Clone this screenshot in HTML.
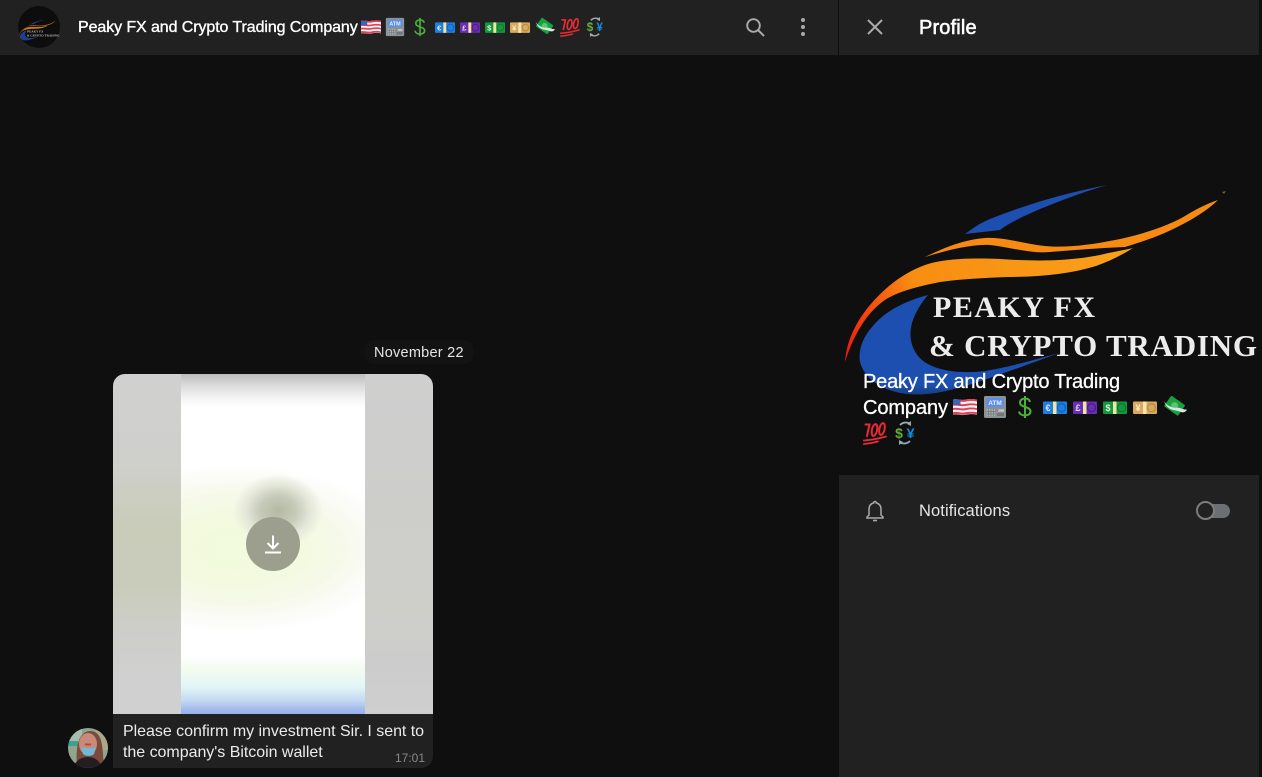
<!DOCTYPE html>
<html><head><meta charset="utf-8"><style>
html,body{margin:0;padding:0;width:1262px;height:777px;overflow:hidden;background:#0f0f0f;font-family:"Liberation Sans",sans-serif;}
.a{position:absolute;white-space:nowrap;}
svg{position:absolute;display:block;overflow:visible}
</style></head><body>
<svg width="0" height="0" style="position:absolute">
<defs>
<symbol id="flag" viewBox="0 0 24 24" overflow="visible"><path d="M0 4.500c4-1 8 1 12 .2s8-1 12 0v15c-4-1-8-.6-12 .2s-8-.9-12-.2z" fill="#f7f2f2"/><path d="M0 4.500c4-1 8 1 12 .2s8-1 12 0v1.800c-4-1-8-.6-12 .2s-8-1-12-.2zM0 8.800c4-1 8 1 12 .2s8-1 12 0v1.800c-4-1-8-.6-12 .2s-8-1-12-.2zM0 13c4-1 8 1 12 .2s8-1 12 0V15c-4-1-8-.6-12 .2s-8-1-12-.2zM0 17.200c4-1 8 1 12 .2s8-1 12 0v2c-4-1-8-.6-12 .2s-8-.9-12-.2z" fill="#e0405a"/><path d="M0 4.500c2.500-.6 5 0 7.500.3v5.600c-2.500-.1-5-.7-7.500-.4z" fill="#3f62b5"/></symbol>
<symbol id="atm" viewBox="0 0 24 24" overflow="visible"><rect x="1" y="1" width="22" height="22" rx="1.500" fill="#8a9296"/><rect x="3.500" y="3" width="17" height="9" fill="#5c8fe8"/><text x="12" y="10" font-family="Liberation Sans" font-size="6.500" font-weight="700" text-anchor="middle" fill="#e6eefc">ATM</text><path d="M3.500 14h8.500v7H3.500z" fill="#a8aeb0"/><path d="M5.500 14v7M8 14v7M10.500 14v7M3.500 16.500h8.500M3.500 19h8.500" stroke="#6d7478" stroke-width=".7"/><rect x="14" y="14.500" width="7" height="2" fill="#c9ccb8"/><rect x="14" y="18" width="7" height="3" fill="#70777b"/><circle cx="14.500" cy="15.500" r=".9" fill="#d9534a"/></symbol>
<symbol id="dollar" viewBox="0 0 24 24" overflow="visible"><path d="M12 1v22M17 7c-.5-2.500-2.500-3.500-5-3.500S7 5 7 7.500c0 5.500 10.500 3.500 10.500 9 0 2.500-2.500 4-5.500 4s-5.500-1.500-6-4" fill="none" stroke="#4caf3c" stroke-width="2"/></symbol>
<symbol id="euro" viewBox="0 0 24 24" overflow="visible"><rect x="0" y="6.500" width="24" height="12.500" rx="1" fill="#1e7fe0"/><rect x="10" y="6.500" width="3.500" height="12.500" fill="#f3e4a0"/><circle cx="18.500" cy="12.700" r="4" fill="none" stroke="#0f62bd" stroke-width="1.300"/><text x="5" y="16" font-family="Liberation Sans" font-size="9" font-weight="700" text-anchor="middle" fill="#cfe6ff">€</text></symbol>
<symbol id="pound" viewBox="0 0 24 24" overflow="visible"><rect x="0" y="6.500" width="24" height="12.500" rx="1" fill="#6a2eb0"/><rect x="10" y="6.500" width="3.500" height="12.500" fill="#f3e4a0"/><circle cx="18.500" cy="12.700" r="4" fill="none" stroke="#4b1c8a" stroke-width="1.300"/><text x="5" y="16" font-family="Liberation Sans" font-size="9" font-weight="700" text-anchor="middle" fill="#e5d5fa">£</text></symbol>
<symbol id="bill" viewBox="0 0 24 24" overflow="visible"><rect x="0" y="6.500" width="24" height="12.500" rx="1" fill="#15973f"/><rect x="10" y="6.500" width="3.500" height="12.500" fill="#f3e4a0"/><circle cx="18.500" cy="12.700" r="4" fill="none" stroke="#0b7a2e" stroke-width="1.300"/><text x="5" y="16" font-family="Liberation Sans" font-size="9" font-weight="700" text-anchor="middle" fill="#d5f5dd">$</text></symbol>
<symbol id="yen" viewBox="0 0 24 24" overflow="visible"><rect x="0" y="6.500" width="24" height="12.500" rx="1" fill="#d9a95c"/><rect x="10" y="6.500" width="3.500" height="12.500" fill="#f7e6b0"/><circle cx="18.500" cy="12.700" r="4" fill="none" stroke="#b98a42" stroke-width="1.300"/><text x="5" y="16" font-family="Liberation Sans" font-size="9" font-weight="700" text-anchor="middle" fill="#fbeecb">¥</text></symbol>
<symbol id="wings" viewBox="0 0 24 24" overflow="visible"><g transform="rotate(35 12 11)"><rect x="3" y="4.500" width="17" height="13" rx="1" fill="#17a23f"/><circle cx="11.500" cy="11" r="3.500" fill="#5fc56c"/></g><path d="M1 6c2 3.500 5 5.500 9 6.500 3 .8 5-.3 7 .5 2.500 1 5 1.800 7 1.500-1 2-3 3.500-6 2.500-2.500-.8-5-1.500-8-2-4-1-7.500-4-9-9z" fill="#dde3e4"/></symbol>
<symbol id="hundred" viewBox="0 0 24 24" overflow="visible"><g fill="none" stroke="#ea2a35" stroke-width="2" stroke-linecap="round"><path d="M2.500 3.500h4L4 15"/><ellipse cx="11.500" cy="9" rx="2.600" ry="6" transform="rotate(12 11.500 9)"/><ellipse cx="19" cy="8" rx="2.600" ry="6" transform="rotate(12 19 8)"/><path d="M.8 19.500C9 19 16 17.500 23 15.500M.8 23C7 22.500 11 21.500 15 20.500" stroke-width="1.800"/></g></symbol>
<symbol id="exch" viewBox="0 0 24 24" overflow="visible"><g fill="none" stroke="#9aa9b2" stroke-width="1.800"><path d="M7 4C10 1 14 1 17 2.500M17 20c-3 3-7 3-10 1.500"/></g><path d="M18 0v5l-4-2zM6 24v-5l4 2z" fill="#9aa9b2"/><text x="6" y="17" font-family="Liberation Sans" font-size="14" font-weight="700" text-anchor="middle" fill="#66ad3c">$</text><text x="17.500" y="17" font-family="Liberation Sans" font-size="14" font-weight="700" text-anchor="middle" fill="#0f8fdd">¥</text></symbol>

<symbol id="logo" viewBox="840 170 422 240" overflow="visible">
<path d="M1107 185C1060 194 1020 207 990 219C980 223 972 229 965 234L1000 230C1010 222 1030 213 1050 205C1070 197 1090 190 1107 185Z" fill="#1c4fb0"/>
<path d="M928 295C905 301 885 311 872 327C862 338 858 352 860 362C864 377 878 388 900 393C920 397 945 393 975 383C1005 373 1035 362 1059 353C1030 361 1005 368 985 371C960 374 935 371 922 360C912 351 908 338 912 323C915 313 921 303 928 295Z" fill="#1c4fb0"/>
<path d="M845 362C846 345 853 327 866 310C880 292 900 274 925 265C945 258 975 258 1000 259C1030 261 1065 262 1100 255C1112 252 1125 250 1133 248C1122 255 1110 261 1096 266C1070 274 1040 277 1007 277C985 278 960 279 940 282C920 286 903 290 888 298C870 309 855 330 845 362Z" fill="url(#og)"/>
<path d="M925 257C940 250 960 240 985 238C1005 237 1025 244 1045 246C1065 248 1090 245 1115 240C1140 235 1170 226 1190 213C1202 206 1212 202 1218 200C1210 208 1198 216 1185 223C1165 234 1145 241 1125 247C1100 248 1075 250 1050 252C1030 254 1010 247 990 245C970 244 945 251 925 257Z" fill="#f68a12"/>
<path d="M1222 192l4-1-2 3z" fill="#7a5a20"/>
<text x="933" y="317" font-family="Liberation Serif" font-size="30" font-weight="700" fill="#ececec" textLength="162" lengthAdjust="spacing">PEAKY FX</text>
<text x="929" y="356" font-family="Liberation Serif" font-size="31" font-weight="700" fill="#ececec" textLength="328" lengthAdjust="spacing">&amp; CRYPTO TRADING</text>
</symbol>
<linearGradient id="og" x1="845" y1="360" x2="1130" y2="250" gradientUnits="userSpaceOnUse"><stop offset="0" stop-color="#f01515"/><stop offset=".12" stop-color="#f5450f"/><stop offset=".3" stop-color="#f88d12"/><stop offset="1" stop-color="#f9a11a"/></linearGradient>
</defs>
</svg>

<!-- left header -->
<div class="a" style="left:0;top:0;width:838px;height:55px;background:#212121"></div>
<div class="a" style="left:838px;top:0;width:1px;height:55px;background:#0f0f0f"></div>
<!-- right panel -->
<div class="a" style="left:839px;top:0;width:420px;height:55px;background:#212121"></div>
<div class="a" style="left:839px;top:475px;width:420px;height:302px;background:#212121"></div>

<!-- header avatar -->
<div class="a" style="left:18px;top:6px;width:42px;height:42px;border-radius:50%;background:#0d0d0d;overflow:hidden"></div>
<svg style="left:18px;top:18px;opacity:.8" width="42" height="24"><use href="#logo" x="0" y="0" width="42" height="24"/></svg>

<div class="a" style="left:78px;top:18px;font-size:16px;line-height:20px;font-weight:400;color:#fff;-webkit-text-stroke:.35px #fff;letter-spacing:-.09px" id="t1">Peaky FX and Crypto Trading Company</div>
<svg style="left:361px;top:17px" width="20" height="20"><use href="#flag" width="20" height="20"/></svg>
<svg style="left:385px;top:17px" width="20" height="20"><use href="#atm" width="20" height="20"/></svg>
<svg style="left:410px;top:17px" width="20" height="20"><use href="#dollar" width="20" height="20"/></svg>
<svg style="left:435px;top:17px" width="20" height="20"><use href="#euro" width="20" height="20"/></svg>
<svg style="left:460px;top:17px" width="20" height="20"><use href="#pound" width="20" height="20"/></svg>
<svg style="left:485px;top:17px" width="20" height="20"><use href="#bill" width="20" height="20"/></svg>
<svg style="left:510px;top:17px" width="20" height="20"><use href="#yen" width="20" height="20"/></svg>
<svg style="left:535px;top:17px" width="20" height="20"><use href="#wings" width="20" height="20"/></svg>
<svg style="left:560px;top:17px" width="20" height="20"><use href="#hundred" width="20" height="20"/></svg>
<svg style="left:585px;top:17px" width="20" height="20"><use href="#exch" width="20" height="20"/></svg>

<!-- search -->
<svg style="left:743px;top:15px" width="24" height="24" viewBox="0 0 24 24"><circle cx="10.500" cy="10.500" r="6.300" fill="none" stroke="#aaa" stroke-width="1.900"/><path d="M15 15l6 6" stroke="#aaa" stroke-width="2" fill="none"/></svg>
<!-- dots -->
<svg style="left:791px;top:15px" width="24" height="24" viewBox="0 0 24 24"><circle cx="12" cy="5" r="2" fill="#aaa"/><circle cx="12" cy="12" r="2" fill="#aaa"/><circle cx="12" cy="19" r="2" fill="#aaa"/></svg>
<!-- close -->
<svg style="left:863px;top:15px" width="24" height="24" viewBox="0 0 24 24"><path d="M5 5l14 14M19 5L5 19" stroke="#aaa" stroke-width="2" fill="none"/></svg>
<div class="a" style="left:919px;top:16px;font-size:20px;line-height:24px;font-weight:400;color:#fff;-webkit-text-stroke:.55px #fff;letter-spacing:.15px">Profile</div>

<!-- hero -->
<svg style="left:839px;top:170px" width="420" height="240" viewBox="839 170 420 240"><use href="#logo" x="840" y="170" width="422" height="240"/></svg>
<div class="a" style="left:839px;top:385px;width:420px;height:90px;background:linear-gradient(to bottom,rgba(15,15,15,0),rgba(15,15,15,.7) 25%,rgba(15,15,15,.95))"></div>
<div class="a" style="left:863px;top:369px;font-size:20px;line-height:26px;font-weight:400;color:#fff;-webkit-text-stroke:.3px #fff;letter-spacing:-.2px">Peaky FX and Crypto Trading</div>
<div class="a" style="left:863px;top:395px;font-size:20px;line-height:26px;font-weight:400;color:#fff;-webkit-text-stroke:.3px #fff;letter-spacing:-.1px">Company</div>
<svg style="left:953px;top:395px" width="24" height="24"><use href="#flag" width="24" height="24"/></svg>
<svg style="left:983px;top:395px" width="24" height="24"><use href="#atm" width="24" height="24"/></svg>
<svg style="left:1013px;top:395px" width="24" height="24"><use href="#dollar" width="24" height="24"/></svg>
<svg style="left:1043px;top:395px" width="24" height="24"><use href="#euro" width="24" height="24"/></svg>
<svg style="left:1073px;top:395px" width="24" height="24"><use href="#pound" width="24" height="24"/></svg>
<svg style="left:1103px;top:395px" width="24" height="24"><use href="#bill" width="24" height="24"/></svg>
<svg style="left:1133px;top:395px" width="24" height="24"><use href="#yen" width="24" height="24"/></svg>
<svg style="left:1163px;top:395px" width="24" height="24"><use href="#wings" width="24" height="24"/></svg>
<svg style="left:863px;top:421px" width="24" height="24"><use href="#hundred" width="24" height="24"/></svg>
<svg style="left:893px;top:421px" width="24" height="24"><use href="#exch" width="24" height="24"/></svg>

<!-- notifications -->
<svg style="left:863px;top:499px" width="24" height="24" viewBox="0 0 24 24"><path d="M12 2.500a1.300 1.300 0 0 1 1.300 1.400C16.500 4.700 18 7.300 18 10.500v5.500l2 2v1H4v-1l2-2v-5.500c0-3.200 1.500-5.800 4.700-6.600A1.300 1.300 0 0 1 12 2.500z" fill="none" stroke="#aaa" stroke-width="1.500"/><path d="M10 21.500h4" stroke="#aaa" stroke-width="1.600"/></svg>
<div class="a" style="left:919px;top:501px;font-size:16.500px;line-height:20px;color:#e6e6e6;letter-spacing:.1px" id="t2">Notifications</div>
<div class="a" style="left:1197px;top:504px;width:33px;height:14px;border-radius:7px;background:#6c7075"></div>
<div class="a" style="left:1196px;top:501px;width:15px;height:15px;border:2px solid #7d7d7d;border-radius:50%;background:#212121"></div>

<!-- date -->
<div class="a" style="left:364px;top:340px;width:110px;height:24px;border-radius:10px;background:#131313"></div>
<div class="a" style="left:374px;top:343px;font-size:14.500px;line-height:20px;color:#e6e6e6;letter-spacing:.25px" id="t3">November 22</div>

<!-- message -->
<div class="a" style="left:113px;top:374px;width:320px;height:394px;border-radius:12px 12px 12px 0;background:#212121;overflow:hidden">
 <div style="position:absolute;left:0;top:0;width:68px;height:340px;background:linear-gradient(to bottom,#d0d0d0 0,#cfd0cc 25%,#c9ccb9 45%,#c9ccba 62%,#cccec6 72%,#d0d0d0 88%,#d0d0d0 100%)"></div>
 <div style="position:absolute;left:252px;top:0;width:68px;height:340px;background:linear-gradient(to bottom,#cfcfcf,#cdcdca 40%,#cfcfca 70%,#cccccc 85%,#cfcfcf)"></div>
 <div style="position:absolute;left:68px;top:0;width:184px;height:340px;overflow:hidden;background:#fff">
    <div style="position:absolute;left:0;top:0;width:184px;height:34px;background:linear-gradient(to bottom,#bcbcbc,#d8d8d8 30%,#f4f4f4 70%,#fff)"></div>
    <div style="position:absolute;left:-110px;top:90px;width:330px;height:170px;background:radial-gradient(closest-side,#f2fbdc 0,#f3fae0 40%,#f6f9ea 65%,#fbfcf8 85%,rgba(255,255,255,0) 100%)"></div>
    <div style="position:absolute;left:52px;top:100px;width:90px;height:74px;background:radial-gradient(closest-side,#b4b9a4 0,#c6cab8 40%,#e4e7da 72%,rgba(255,255,255,0) 100%)"></div>
    <div style="position:absolute;left:0;top:280px;width:184px;height:60px;background:linear-gradient(to bottom,rgba(255,255,255,0) 0,#f2fbf0 28%,#e2f5f6 55%,#c4d8f2 78%,#a3bbee 92%,#98b0ec 100%)"></div>
 </div>
</div>
<div class="a" style="left:246px;top:517px;width:54px;height:54px;border-radius:50%;background:#9c9f8e"></div>
<svg style="left:261px;top:532px" width="24" height="24" viewBox="0 0 24 24"><path d="M12 3.500v13M6.500 11l5.500 5.500 5.500-5.500M4 20.500h16" fill="none" stroke="#fff" stroke-width="2"/></svg>

<div class="a" style="left:123px;top:721px;font-size:16px;line-height:21px;color:#ececec;letter-spacing:-.03px" id="t4">Please confirm my investment Sir. I sent to<br>the company's Bitcoin wallet</div>
<div class="a" style="left:395px;top:750px;font-size:12px;line-height:16px;color:#8a8a8a">17:01</div>

<!-- avatar -->
<svg style="left:68px;top:728px" width="40" height="40" viewBox="0 0 40 40"><defs><clipPath id="av"><circle cx="20" cy="20" r="20"/></clipPath></defs><g clip-path="url(#av)"><rect width="40" height="40" fill="#8fa68e"/><rect x="0" y="0" width="14" height="14" fill="#a7bcae"/><rect x="28" y="2" width="12" height="20" fill="#a9a88a"/><rect x="0" y="13" width="10" height="5" fill="#3ca08a"/><path d="M9 40C8 25 8 4 22 3c11 0 12 12 13 22 0 6 1 10 2 15z" fill="#7b4a3c"/><ellipse cx="20" cy="16" rx="9" ry="11" fill="#c98a78"/><path d="M13 19c4 1 8 2 15 0l-2 7c-3 3-9 2-11 0z" fill="#6fb9d4"/><path d="M17 15.500h6v2h-6z" fill="#b5484c"/><path d="M5 40c2-7 8-11 15-11s12 4 14 11z" fill="#241d22"/></g></svg>
</body></html>
